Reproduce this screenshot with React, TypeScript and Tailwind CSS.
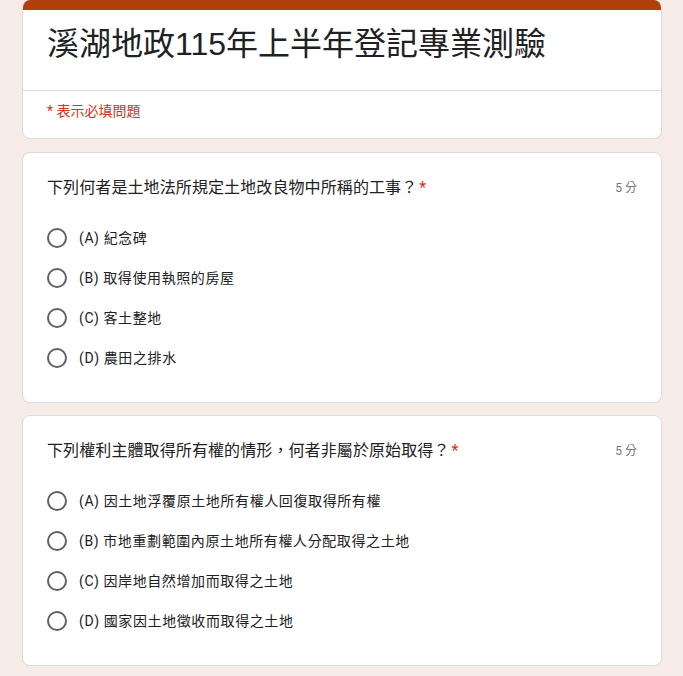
import React from "react";

const cjk = { fontFamily: 'Roboto, "Noto Sans CJK TC", sans-serif' };
const titleFont = { fontFamily: '"Liberation Sans", "Noto Sans CJK TC", sans-serif' };

type Q = { text: string; options: string[] };

const questions: Q[] = [
  {
    text: "下列何者是土地法所規定土地改良物中所稱的工事？",
    options: ["(A) 紀念碑", "(B) 取得使用執照的房屋", "(C) 客土整地", "(D) 農田之排水"],
  },
  {
    text: "下列權利主體取得所有權的情形，何者非屬於原始取得？",
    options: [
      "(A) 因土地浮覆原土地所有權人回復取得所有權",
      "(B) 市地重劃範圍內原土地所有權人分配取得之土地",
      "(C) 因岸地自然增加而取得之土地",
      "(D) 國家因土地徵收而取得之土地",
    ],
  },
];

function QuestionCard({ q }: { q: Q }) {
  return (
    <div className="rounded-lg bg-white border border-[#dadce0] px-6 pt-[23px] pb-6">
      <div className="flex justify-between items-start">
        <div className="text-[16px] leading-6 tracking-[0.1px] text-[#202124]">
          {q.text}
          <span className="text-[#d93025] pl-[2px]">*</span>
        </div>
        <div className="text-[12px] leading-6 text-[#70757a] shrink-0 ml-4">5 分</div>
      </div>
      <div className="mt-[18px] flex flex-col">
        {q.options.map((o) => (
          <div key={o} className="h-10 flex items-center gap-3">
            <div className="w-5 h-5 rounded-full border-2 border-[#5f6368] shrink-0" />
            <div className="text-[14px] leading-5 tracking-[0.6px] text-[#202124]">{o}</div>
          </div>
        ))}
      </div>
    </div>
  );
}

export default function App() {
  return (
    <div className="min-h-screen bg-[#f6ebe6]" style={cjk}>
      <div className="ml-[22px] w-[640px] pb-[10px]">
        <div className="rounded-lg bg-white border border-t-0 border-[#dadce0] overflow-hidden">
          <div className="h-[10px] bg-[#b13f0b]" />
          <div className="px-6 pt-[14px] pb-[26px] border-b border-[#dadce0]">
            <h1 className="text-[32px] leading-[40px] text-[#202124] font-normal" style={titleFont}>
              溪湖地政115年上半年登記專業測驗
            </h1>
          </div>
          <div className="px-6 pt-[10px] pb-[17px] text-[14px] leading-5 text-[#d93025]">
            * 表示必填問題
          </div>
        </div>
        <div className="mt-[13px] flex flex-col gap-3">
          {questions.map((q) => (
            <QuestionCard key={q.text} q={q} />
          ))}
        </div>
      </div>
    </div>
  );
}
